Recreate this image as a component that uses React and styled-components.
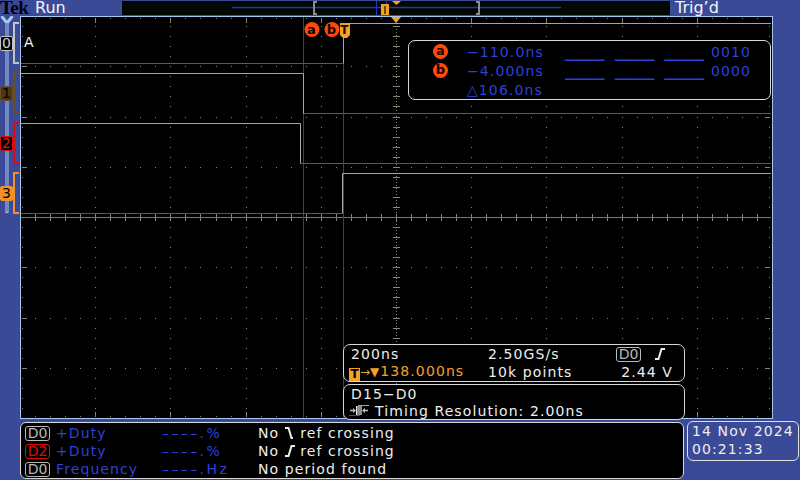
import React from "react";
import styled, { createGlobalStyle } from "styled-components";

const BLUE_BG = "#3b4a97";
const FRAME = "#a6c8f0";
const TXT = "#eeeeee";
const READ = "#2c40da";
const ORANGE = "#f5a128";
const CURSOR = "#ff4a0a";
const GRID = "#8a8474";

const GlobalStyle = createGlobalStyle`
  html, body { margin: 0; padding: 0; background: ${BLUE_BG}; }
  body { font-family: "DejaVu Sans", "Noto Sans", sans-serif; }
`;

// graticule geometry, page coordinates
const X0 = 20;
const Y0 = 16;
const DX = 75.2;
const DY = 50.25;

const gridDots = [];
for (let i = 1; i < 10; i++) {
  if (i === 5) continue;
  const x = Math.round(X0 + DX * i);
  for (let k = 1; k < 40; k++) gridDots.push([x, Math.round(Y0 + (DY / 5) * k)]);
}
for (let j = 1; j < 8; j++) {
  if (j === 4) continue;
  const y = Math.round(Y0 + DY * j);
  for (let k = 1; k < 50; k++) gridDots.push([Math.round(X0 + (DX / 5) * k), y]);
}

const ticks = [];
for (let k = 1; k < 50; k++) {
  const x = Math.round(X0 + (DX / 5) * k);
  const major = k % 5 === 0;
  ticks.push({ x, y: 18, w: 1, h: major ? 5 : 1 });
  ticks.push({ x, y: major ? 412 : 416, w: 1, h: major ? 5 : 1 });
  ticks.push({ x, y: 214, w: 1, h: 7 });
}
for (let k = 1; k < 40; k++) {
  const y = Math.round(Y0 + (DY / 5) * k);
  const major = k % 5 === 0;
  ticks.push({ x: 22, y, w: major ? 5 : 1, h: 1 });
  ticks.push({ x: major ? 765 : 769, y, w: major ? 5 : 1, h: 1 });
  ticks.push({ x: 393, y, w: 7, h: 1 });
}

const channels = [
  { id: "0", line: "#c4c4c4", bg: "#000", fg: "#d4d4d4" },
  { id: "1", line: "#6e4c24", bg: "#4c3818", fg: "#000" },
  { id: "2", line: "#e00a0a", bg: "#000", fg: "#e81010" },
  { id: "3", line: "#f39027", bg: "#f39027", fg: "#000" },
];

// digital traces: [lowY, highY, edgeX, startsHigh]
const traces = [
  [63.5, 23.5, 343.5, false],
  [113.5, 73.5, 303.5, true],
  [163.5, 123.5, 300.5, true],
  [213.5, 173.5, 342.5, false],
];

const Screen = styled.div`
  width: 800px;
  height: 480px;
  overflow: hidden;
  background: ${BLUE_BG};
  display: flex;
  flex-direction: column;
  font-family: "DejaVu Sans", sans-serif;
  font-size: 14px;
  letter-spacing: 1.1px;
  color: ${TXT};
`;

const TopBar = styled.div`
  display: flex;
  align-items: center;
  height: 16px;
  flex: none;
  overflow: hidden;
`;

const Tek = styled.span`
  width: 33px;
  font-family: "Liberation Serif", serif;
  font-weight: bold;
  font-size: 19px;
  line-height: 16px;
  letter-spacing: -0.6px;
  color: #000;
`;

const TopLabel = styled.span`
  box-sizing: border-box;
  width: ${(p) => p.$w || "auto"};
  padding-left: ${(p) => p.$pad || 0}px;
  font-size: 16px;
  line-height: 16px;
  letter-spacing: 0;
  color: #f4f4f4;
`;

const RecordView = styled.div`
  width: 548px;
  height: 14px;
  background: #020802;
  svg { display: block; }
`;

const Middle = styled.div`
  display: flex;
  height: 403px;
  flex: none;
`;

const LeftStrip = styled.div`
  position: relative;
  width: 20px;
  box-sizing: border-box;
  padding-top: 2px;
  display: flex;
  flex-direction: column;
`;

const AxisLine = styled.svg`
  position: absolute;
  left: 0;
  top: 0;
`;

const ChannelSlot = styled.div`
  position: relative;
  height: 50px;
  display: flex;
  align-items: center;
`;

const ChannelBadge = styled.span`
  box-sizing: border-box;
  width: 13px;
  height: 15px;
  line-height: 13px;
  text-align: center;
  font-size: 14px;
  letter-spacing: 0;
  border: 1px solid ${(p) => p.$line};
  border-radius: 2px;
  background: ${(p) => p.$bg};
  color: ${(p) => p.$fg};
`;

const Bracket = styled.span`
  box-sizing: border-box;
  width: 6px;
  height: 42px;
  border: 2px solid ${(p) => p.$line};
  border-right: none;
`;

const Graticule = styled.div`
  position: relative;
  width: 753px;
  height: 403px;
  box-sizing: border-box;
  border: 1px solid ${FRAME};
  background: #000;
  svg.plot { display: block; }
`;

const Panel = styled.div`
  box-sizing: border-box;
  border: 1px solid #d8d8d8;
  border-radius: 7px;
  background: #000;
`;

const CursorPanel = styled(Panel)`
  position: absolute;
  left: 387px;
  top: 23px;
  width: 363px;
  height: 60px;
  padding: 1px 0 0 24px;
  display: grid;
  grid-template-columns: 34px 98px 146px auto;
  grid-auto-rows: 19px;
  align-items: center;
  color: ${READ};
`;

const CursorTag = styled.span`
  width: 15px;
  height: 15px;
  border-radius: 50%;
  background: ${CURSOR};
  color: #1a0200;
  font-weight: bold;
  font-size: 13px;
  line-height: 14px;
  text-align: center;
  letter-spacing: 0;
`;

const Blanks = styled.span`
  font-family: "DejaVu Sans Mono", monospace;
  font-weight: bold;
  font-size: 16.5px;
  letter-spacing: 0;
  white-space: pre;
`;

const InfoStack = styled.div`
  position: absolute;
  left: 322px;
  bottom: -2px;
  width: 342px;
  display: flex;
  flex-direction: column;
  gap: 2px;
`;

const InfoBox = styled(Panel)`
  padding: 0 11px 0 7px;
  display: grid;
  grid-template-columns: ${(p) => p.$cols || "1fr"};
  grid-auto-rows: ${(p) => p.$row}px;
  align-items: center;
  white-space: nowrap;
`;

const Right = styled.span`
  display: flex;
  justify-content: flex-end;
  align-items: center;
`;

const LabelBox = styled.span`
  display: inline-block;
  box-sizing: border-box;
  width: 25px;
  height: 15px;
  line-height: 13px;
  text-align: center;
  letter-spacing: 0;
  border: 1px solid ${(p) => p.$c};
  border-radius: 3px;
  color: ${(p) => p.$c};
`;

const TrigTag = styled.span`
  display: inline-block;
  width: 11px;
  height: 13px;
  margin-left: -2px;
  background: ${ORANGE};
  color: #000;
  font-weight: bold;
  font-size: 12px;
  line-height: 13px;
  text-align: center;
  letter-spacing: 0;
  vertical-align: -2px;
`;

const Orange = styled.span`
  color: ${ORANGE};
`;

const SmallGlyph = styled.span`
  font-size: 12px;
  letter-spacing: 0;
  margin-right: 1px;
`;

const EdgeSvg = styled.svg`
  display: inline-block;
  vertical-align: -1px;
  margin: ${(p) => p.$m || "0 2px"};
`;

const ResolutionLine = styled.span`
  display: flex;
  align-items: center;
  gap: 6px;
  margin-left: -2px;
`;

const BottomRow = styled.div`
  display: flex;
  align-items: flex-start;
  gap: 3px;
  padding-left: 20px;
  margin-top: 2px;
`;

const MeasureBox = styled(Panel)`
  width: 664px;
  height: 57px;
  margin-top: 1px;
  border-radius: 6px;
  padding: 1px 0 0 4px;
  display: grid;
  grid-template-columns: 31px 106px 96px 1fr;
  grid-auto-rows: 18px;
  align-items: center;
  white-space: nowrap;
`;

const MeasName = styled.span`
  color: ${READ};
`;

const MeasValue = styled.span`
  color: ${READ};
  letter-spacing: 2.4px;
`;

const DateBox = styled.div`
  box-sizing: border-box;
  width: 112px;
  height: 40px;
  border: 1px solid #e0e0e0;
  border-radius: 6px;
  padding: 0 0 0 4px;
  line-height: 18px;
`;

const Edge = ({ rising, color = TXT, m }) => (
  <EdgeSvg $m={m} width="10" height="12" viewBox="0 0 10 12">
    <path
      d={rising ? "M0 11 H3.5 L6.5 1 H10" : "M0 1 H3.5 L6.5 11 H8"}
      stroke={color}
      strokeWidth="2"
      fill="none"
    />
  </EdgeSvg>
);

const ResolutionIcon = () => (
  <svg width="20" height="11" viewBox="0 0 20 11">
    <line x1="9" y1="0.5" x2="20" y2="0.5" stroke="#30e08a" />
    <line x1="0" y1="10.5" x2="11" y2="10.5" stroke="#2a4ad8" />
    <rect x="8" y="1" width="5" height="9" fill="#8c8c8c" />
    <path d="M1 5.5 H6" stroke="#bdbdbd" strokeWidth="1.5" />
    <path d="M4 3 L7 5.5 L4 8 Z" fill="#bdbdbd" />
    <path d="M14 5.5 H19" stroke="#bdbdbd" strokeWidth="1.5" />
    <path d="M16 3 L13 5.5 L16 8 Z" fill="#bdbdbd" />
    <line x1="7.5" y1="1" x2="7.5" y2="10" stroke="#e8e8e8" />
  </svg>
);

const measurements = [
  { ch: "D0", c: "#b8b8b8", name: "+Duty", value: "––––.%", edge: false, status: "ref crossing" },
  { ch: "D2", c: "#e00a0a", name: "+Duty", value: "––––.%", edge: true, status: "ref crossing" },
  { ch: "D0", c: "#b8b8b8", name: "Frequency", value: "––––.Hz", status: "No period found" },
];

export default function App() {
  return (
    <Screen>
      <GlobalStyle />
      <TopBar>
        <Tek>Tek</Tek>
        <TopLabel $w="89px" $pad={2}>Run</TopLabel>
        <RecordView>
          <svg width="548" height="14" viewBox="0 0 548 14">
            <line x1="110" y1="6.5" x2="439" y2="6.5" stroke="#2434b4" strokeWidth="1.5" />
            <path d="M195 1 H192 V13 H195" stroke="#8c8c8c" strokeWidth="2" fill="none" />
            <path d="M354 1 H357 V13 H354" stroke="#8c8c8c" strokeWidth="2" fill="none" />
            <line x1="254.5" y1="0" x2="254.5" y2="14" stroke="#2434c8" />
            <line x1="264.5" y1="0" x2="264.5" y2="14" stroke="#2434c8" />
            <rect x="259" y="3" width="8" height="11" fill={ORANGE} />
            <line x1="263" y1="5" x2="263" y2="13" stroke="#3a2a00" strokeWidth="1.5" />
            <polygon points="270,0 279,0 274.5,4" fill={ORANGE} />
          </svg>
        </RecordView>
        <TopLabel $pad={5}>Trig’d</TopLabel>
      </TopBar>

      <Middle>
        <LeftStrip>
          <AxisLine width="20" height="403" viewBox="0 0 20 403">
            <path d="M1.5 0 L7 7 V197 M12.5 0 L7 7" stroke={FRAME} strokeWidth="3" fill="none" />
            <path d="M7 7 V196" stroke={BLUE_BG} strokeWidth="1" fill="none" />
          </AxisLine>
          {channels.map((c) => (
            <ChannelSlot key={c.id}>
              <ChannelBadge $line={c.line} $bg={c.bg} $fg={c.fg}>{c.id}</ChannelBadge>
              <Bracket $line={c.line} />
            </ChannelSlot>
          ))}
        </LeftStrip>

        <Graticule>
          <svg className="plot" width="751" height="401" viewBox="21 17 751 401">
            {gridDots.map(([x, y], i) => (
              <rect key={"d" + i} x={x} y={y} width="1" height="1" fill={GRID} />
            ))}
            {ticks.map((t, i) => (
              <rect key={"t" + i} x={t.x} y={t.y} width={t.w} height={t.h} fill={GRID} />
            ))}
            <line x1="21" y1="217.5" x2="771" y2="217.5" stroke="#7c7668" />
            <line x1="396.5" y1="17" x2="396.5" y2="418" stroke={GRID} strokeDasharray="1 2" />

            <line x1="303.5" y1="17" x2="303.5" y2="418" stroke="#2236d0" />
            <line x1="343.5" y1="37" x2="343.5" y2="418" stroke="#2236d0" />

            {traces.map(([lo, hi, ex, startsHigh], i) => (
              <g key={"w" + i} fill="none">
                <path d={`M21 ${startsHigh ? hi : lo} H${ex}`} stroke={startsHigh ? "#32e08a" : "#2a5ad8"} />
                <path d={`M${ex} ${startsHigh ? lo : hi} H771`} stroke={startsHigh ? "#2a5ad8" : "#32e08a"} />
                <path d={`M${ex} ${lo} V${hi}`} stroke="#a8a8a8" />
              </g>
            ))}

            <text x="24" y="47" fill="#f4f4f4" fontSize="14" fontFamily="DejaVu Sans">A</text>

            <circle cx="312" cy="29.5" r="7.5" fill={CURSOR} />
            <text x="312" y="34" textAnchor="middle" fontSize="13" fontWeight="bold" fill="#1a0200" fontFamily="DejaVu Sans">a</text>
            <circle cx="332" cy="29.5" r="7.5" fill={CURSOR} />
            <text x="332" y="34" textAnchor="middle" fontSize="13" fontWeight="bold" fill="#1a0200" fontFamily="DejaVu Sans">b</text>
            <path d="M340 23 H350 V35 L347 38 H343 L340 35 Z" fill={ORANGE} />
            <text x="345" y="34" textAnchor="middle" fontSize="12" fontWeight="bold" fill="#1a0a00" fontFamily="DejaVu Sans">T</text>
            <polygon points="391,17 401,17 396,23" fill={ORANGE} />
          </svg>

          <CursorPanel>
            <CursorTag>a</CursorTag>
            <span>−110.0ns</span>
            <Blanks>____ ____ ____</Blanks>
            <span>0010</span>
            <CursorTag>b</CursorTag>
            <span>−4.000ns</span>
            <Blanks>____ ____ ____</Blanks>
            <span>0000</span>
            <span />
            <span>△106.0ns</span>
          </CursorPanel>

          <InfoStack>
            <InfoBox $cols="137px 128px 1fr" $row={18}>
              <span>200ns</span>
              <span>2.50GS/s</span>
              <Right>
                <LabelBox $c="#b8b8b8">D0</LabelBox>
                <Edge rising m="0 8px 0 14px" />
              </Right>
              <span>
                <TrigTag>T</TrigTag>
                <Orange>
                  <SmallGlyph>→▼</SmallGlyph>138.000ns
                </Orange>
              </span>
              <span>10k points</span>
              <Right>2.44 V</Right>
            </InfoBox>
            <InfoBox $row={17}>
              <span>D15−D0</span>
              <ResolutionLine>
                <ResolutionIcon />
                <span>Timing Resolution: 2.00ns</span>
              </ResolutionLine>
            </InfoBox>
          </InfoStack>
        </Graticule>
      </Middle>

      <BottomRow>
        <MeasureBox>
          {measurements.map((m, i) => (
            <React.Fragment key={i}>
              <span>
                <LabelBox $c={m.c}>{m.ch}</LabelBox>
              </span>
              <MeasName>{m.name}</MeasName>
              <MeasValue>{m.value}</MeasValue>
              <span>
                {m.edge === undefined ? (
                  m.status
                ) : (
                  <>
                    No<Edge rising={m.edge} m="0 5px 0 6px" />{m.status}
                  </>
                )}
              </span>
            </React.Fragment>
          ))}
        </MeasureBox>
        <DateBox>
          <div>14 Nov 2024</div>
          <div>00:21:33</div>
        </DateBox>
      </BottomRow>
    </Screen>
  );
}
